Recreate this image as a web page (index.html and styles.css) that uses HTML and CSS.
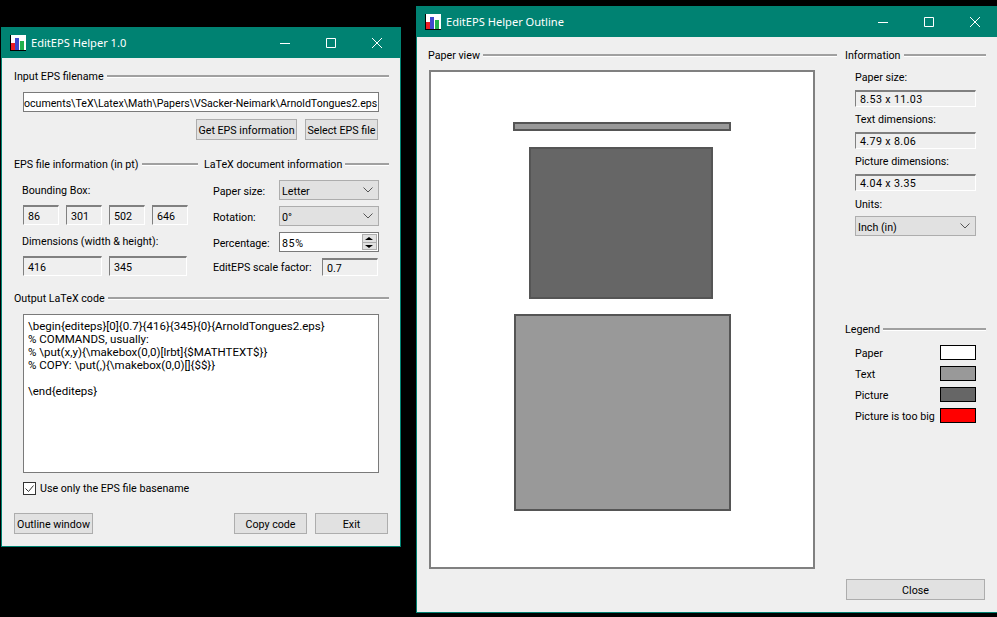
FILE: index.html
```html
<!DOCTYPE html>
<html lang="en">
<head>
  <meta charset="UTF-8">
  <title>EditEPS Helper</title>
  <link rel="stylesheet" href="styles.css">
</head>
<body>
  <div class="window main-window">
    <div class="titlebar">
      <svg class="app-icon" viewBox="0 0 16 16" xmlns="http://www.w3.org/2000/svg">
        <rect width="16" height="16" fill="#fff"/>
        <rect x="0" y="0" width="1" height="16" fill="#000"/>
        <rect x="0" y="15" width="16" height="1" fill="#000"/>
        <rect x="1" y="8" width="4" height="7" fill="#ed1c24"/>
        <rect x="5" y="3" width="4" height="12" fill="#3f48cc"/>
        <rect x="10" y="6" width="4" height="9" fill="#22b14c"/>
      </svg>
      <span class="title-text">EditEPS Helper 1.0</span>
      <div class="window-controls">
        <svg viewBox="0 0 46 30" xmlns="http://www.w3.org/2000/svg"><path d="M18 15.5h10" stroke="#fff" fill="none"/></svg>
        <svg viewBox="0 0 46 30" xmlns="http://www.w3.org/2000/svg"><path d="M18.5 10.5h9v9h-9z" stroke="#fff" fill="none"/></svg>
        <svg viewBox="0 0 46 30" xmlns="http://www.w3.org/2000/svg"><path d="M18 10l10 10M28 10l-10 10" stroke="#fff" fill="none"/></svg>
      </div>
    </div>
    <div class="main-body">
      <div class="group-title"><span>Input EPS filename</span></div>
      <div class="line-edit filename">ocuments\TeX\Latex\Math\Papers\VSacker-Neimark\ArnoldTongues2.eps</div>
      <div class="button-row">
        <button class="btn btn-info">Get EPS information</button>
        <button class="btn btn-select">Select EPS file</button>
      </div>

      <div class="info-columns">
        <div>
          <div class="group-title"><span>EPS file information (in pt)</span></div>
          <div class="field-label bbox-label">Bounding Box:</div>
          <div class="bbox-fields">
            <div class="sunken">86</div>
            <div class="sunken">301</div>
            <div class="sunken">502</div>
            <div class="sunken">646</div>
          </div>
          <div class="field-label dims-label">Dimensions (width &amp; height):</div>
          <div class="dims-fields">
            <div class="sunken">416</div>
            <div class="sunken">345</div>
          </div>
        </div>
        <div>
          <div class="group-title"><span>LaTeX document information</span></div>
          <div class="doc-form">
            <label>Paper size:</label>
            <div class="combo"><span>Letter</span><svg class="chevron" viewBox="0 0 10 6" xmlns="http://www.w3.org/2000/svg"><path d="M.5.5L5 5 9.500.5" fill="none" stroke="#555"/></svg></div>
            <label>Rotation:</label>
            <div class="combo"><span>0°</span><svg class="chevron" viewBox="0 0 10 6" xmlns="http://www.w3.org/2000/svg"><path d="M.5.5L5 5 9.500.5" fill="none" stroke="#555"/></svg></div>
            <label>Percentage:</label>
            <div class="line-edit spin">
              <span>85%</span>
              <div class="spin-buttons">
                <div class="spin-up"></div>
                <div class="spin-down"></div>
              </div>
            </div>
          </div>
          <div class="scale-row">
            <label>EditEPS scale factor:</label>
            <div class="sunken scale-field">0.7</div>
          </div>
        </div>
      </div>

      <div class="group-title output-title"><span>Output LaTeX code</span></div>
      <div class="code-box">\begin{editeps}[0]{0.7}{416}{345}{0}{ArnoldTongues2.eps}
% COMMANDS, usually:
% \put(x,y){\makebox(0,0)[lrbt]{$MATHTEXT$}}
% COPY: \put(,){\makebox(0,0)[]{$$}}

\end{editeps}</div>
      <div class="check-row">
        <svg class="checkbox" viewBox="0 0 13 13" xmlns="http://www.w3.org/2000/svg">
          <rect x=".5" y=".5" width="12" height="12" fill="#fff" stroke="#333"/>
          <path d="M2.500 6.500l3 3 5-6" fill="none" stroke="#333"/>
        </svg>
        <span>Use only the EPS file basename</span>
      </div>
      <div class="footer-row">
        <button class="btn btn-outline">Outline window</button>
        <button class="btn btn-footer">Copy code</button>
        <button class="btn btn-footer">Exit</button>
      </div>
    </div>
  </div>

  <div class="window outline-window">
    <div class="titlebar">
      <svg class="app-icon" viewBox="0 0 16 16" xmlns="http://www.w3.org/2000/svg">
        <rect width="16" height="16" fill="#fff"/>
        <rect x="0" y="0" width="1" height="16" fill="#000"/>
        <rect x="0" y="15" width="16" height="1" fill="#000"/>
        <rect x="1" y="8" width="4" height="7" fill="#ed1c24"/>
        <rect x="5" y="3" width="4" height="12" fill="#3f48cc"/>
        <rect x="10" y="6" width="4" height="9" fill="#22b14c"/>
      </svg>
      <span class="title-text">EditEPS Helper Outline</span>
      <div class="window-controls">
        <svg viewBox="0 0 46 30" xmlns="http://www.w3.org/2000/svg"><path d="M18 15.5h10" stroke="#fff" fill="none"/></svg>
        <svg viewBox="0 0 46 30" xmlns="http://www.w3.org/2000/svg"><path d="M18.5 10.5h9v9h-9z" stroke="#fff" fill="none"/></svg>
        <svg viewBox="0 0 46 30" xmlns="http://www.w3.org/2000/svg"><path d="M18 10l10 10M28 10l-10 10" stroke="#fff" fill="none"/></svg>
      </div>
    </div>
    <div class="outline-body">
      <div class="paper-column">
        <div class="group-title"><span>Paper view</span></div>
        <div class="paper">
          <div class="sheet-rect text-rect bar-rect"></div>
          <div class="sheet-rect picture-rect"></div>
          <div class="sheet-rect text-rect body-rect"></div>
        </div>
      </div>
      <div class="side-column">
        <div class="group-title"><span>Information</span></div>
        <div class="info-item">
          <div class="info-label">Paper size:</div>
          <div class="sunken info-field">8.53 x 11.03</div>
        </div>
        <div class="info-item">
          <div class="info-label">Text dimensions:</div>
          <div class="sunken info-field">4.79 x 8.06</div>
        </div>
        <div class="info-item">
          <div class="info-label">Picture dimensions:</div>
          <div class="sunken info-field">4.04 x 3.35</div>
        </div>
        <div class="info-item units-item">
          <div class="info-label">Units:</div>
          <div class="combo units-combo"><span>Inch (in)</span><svg class="chevron" viewBox="0 0 10 6" xmlns="http://www.w3.org/2000/svg"><path d="M.5.5L5 5 9.500.5" fill="none" stroke="#555"/></svg></div>
        </div>

        <div class="group-title legend-title"><span>Legend</span></div>
        <div class="legend">
          <div class="legend-row"><span>Paper</span><div class="swatch swatch-paper"></div></div>
          <div class="legend-row"><span>Text</span><div class="swatch swatch-text"></div></div>
          <div class="legend-row"><span>Picture</span><div class="swatch swatch-picture"></div></div>
          <div class="legend-row"><span>Picture is too big</span><div class="swatch swatch-big"></div></div>
        </div>
        <button class="btn btn-close">Close</button>
      </div>
    </div>
  </div>
</body>
</html>
```

FILE: styles.css
```css
* {
  margin: 0;
  padding: 0;
  box-sizing: border-box;
}

body {
  width: 997px;
  height: 617px;
  background-color: #000;
  overflow: hidden;
  position: relative;
  font-family: Roboto, "Noto Sans", sans-serif;
  font-size: 10.7px;
  line-height: 16px;
  color: #000;
}

/* windows sit on a free desktop */
.window {
  position: absolute;
  background-color: #efefef;
  border: 1px solid #008272;
  display: flex;
  flex-direction: column;
}

.main-window {
  left: 1px;
  top: 27px;
  width: 400px;
  height: 520px;
}

.outline-window {
  left: 416px;
  top: 6px;
  width: 583px;
  height: 607px;
}

.titlebar {
  height: 30px;
  flex: none;
  background-color: #008272;
  color: #fff;
  display: flex;
  align-items: center;
  padding-left: 8px;
}

.app-icon {
  width: 16px;
  height: 16px;
  flex: none;
}

.title-text {
  margin-left: 5px;
  font-family: "Noto Sans", sans-serif;
  font-size: 11.1px;
}

.window-controls {
  margin-left: auto;
  display: flex;
}

.window-controls svg {
  width: 46px;
  height: 30px;
  display: block;
}

.group-title {
  display: flex;
  align-items: center;
  height: 16px;
  white-space: nowrap;
}

.group-title span {
  height: 16px;
  line-height: 18px;
}

.group-title::after {
  content: "";
  flex: 1;
  height: 2px;
  margin-left: 3px;
  background-color: #a0a0a0;
  border-bottom: 1px solid #fff;
}

.main-body {
  flex: 1;
  padding: 10px 11px 0 12px;
}

.line-edit {
  background-color: #fff;
  border: 1px solid #7a7a7a;
  height: 20px;
  line-height: 22px;
  white-space: nowrap;
  overflow: hidden;
}

.filename {
  margin: 8px 10px 0 9px;
  font-size: 10.6px;
}

.button-row {
  display: flex;
  justify-content: flex-end;
  gap: 8px;
  margin: 7px 11px 0 0;
}

.btn {
  height: 21px;
  padding-top: 2px;
  font: inherit;
  color: #000;
  background-color: #e1e1e1;
  border: 1px solid #adadad;
  text-align: center;
  white-space: nowrap;
}

.btn-info {
  width: 101px;
}

.btn-select {
  width: 73px;
}

.info-columns {
  display: grid;
  grid-template-columns: 184px 185px;
  gap: 6px;
  margin-top: 16px;
}

.field-label {
  height: 16px;
  line-height: 18px;
  margin-left: 8px;
}

.bbox-label {
  margin-top: 10px;
}

.dims-label {
  margin-top: 8px;
}

.sunken {
  height: 20px;
  padding-left: 4px;
  line-height: 20px;
  background-color: #efefef;
  border: 1px solid #fff;
  border-top: 2px solid #808080;
  border-left: 1px solid #808080;
  white-space: nowrap;
}

.bbox-fields {
  display: grid;
  grid-template-columns: 36px 36px 36px 36px;
  gap: 7px;
  margin: 7px 11px 0 9px;
}

.dims-fields {
  display: grid;
  grid-template-columns: 79px 78px;
  gap: 7px;
  margin: 7px 11px 0 9px;
}

.doc-form {
  display: grid;
  grid-template-columns: 66px 100px;
  row-gap: 6px;
  align-items: center;
  margin: 8px 0 0 9px;
}

.doc-form label {
  margin-top: 4px;
}

.combo {
  height: 20px;
  padding: 0 4px 0 2px;
  background-color: #e1e1e1;
  border: 1px solid #adadad;
  display: flex;
  align-items: center;
  justify-content: space-between;
}

.combo span {
  margin-top: 4px;
}

.chevron {
  width: 10px;
  height: 6px;
  margin-right: 1px;
}

.spin {
  display: flex;
  align-items: center;
  justify-content: space-between;
  padding-left: 2px;
  line-height: 16px;
}

.spin span {
  margin-top: 4px;
  letter-spacing: 0.6px;
}

.spin-buttons {
  width: 15px;
  height: 16px;
  margin-right: 1px;
  display: flex;
  flex-direction: column;
  border: 1px solid #adadad;
  background-color: #e1e1e1;
}

.spin-up,
.spin-down {
  flex: 1;
  position: relative;
}

.spin-down {
  border-top: 1px solid #adadad;
}

.spin-up::after,
.spin-down::after {
  content: "";
  position: absolute;
  left: 2px;
  top: 2px;
  border-left: 4px solid transparent;
  border-right: 4px solid transparent;
}

.spin-up::after {
  border-bottom: 3px solid #000;
}

.spin-down::after {
  border-top: 3px solid #000;
}

.scale-row {
  display: flex;
  align-items: center;
  margin: 6px 0 0 9px;
}

.scale-row label {
  width: 109px;
  margin-top: 2px;
}

.scale-field {
  width: 56px;
  height: 18px;
  line-height: 18px;
}

.output-title {
  margin-top: 14px;
}

.code-box {
  margin: 8px 10px 0 9px;
  height: 159px;
  padding: 5px 4px;
  font-size: 11.5px;
  background-color: #fff;
  border: 1px solid #7a7a7a;
  white-space: pre;
  line-height: 13px;
}

.check-row {
  display: flex;
  align-items: center;
  gap: 4px;
  height: 14px;
  margin: 8px 0 0 9px;
}

.check-row span {
  margin-top: 2px;
}

.checkbox {
  width: 13px;
  height: 13px;
}

.footer-row {
  display: flex;
  gap: 8px;
  margin: 18px 1px 0 0;
}

.btn-outline {
  width: 79px;
  margin-right: auto;
}

.btn-footer {
  width: 73px;
}

.outline-body {
  flex: 1;
  display: flex;
  gap: 8px;
  padding: 10px 12px 12px 11px;
}

.paper-column {
  width: 409px;
}

.paper {
  position: relative;
  width: 386px;
  height: 499px;
  margin: 7px 0 0 1px;
  background-color: #fff;
  border: 2px solid #808080;
}

.sheet-rect {
  position: absolute;
  border: 2px solid #555;
}

.text-rect {
  background-color: #999;
}

.bar-rect {
  left: 82px;
  top: 50px;
  width: 218px;
  height: 9px;
}

.picture-rect {
  left: 98px;
  top: 75px;
  width: 184px;
  height: 152px;
  background-color: #666;
}

.body-rect {
  left: 83px;
  top: 242px;
  width: 217px;
  height: 197px;
}

.side-column {
  width: 141px;
  display: flex;
  flex-direction: column;
}

.info-item {
  margin-left: 10px;
  width: 121px;
}

.info-label {
  height: 16px;
  line-height: 18px;
  margin-top: 6px;
}

.info-field {
  height: 17px;
  line-height: 16px;
  margin-top: 5px;
  letter-spacing: 0.35px;
}

.info-item + .info-item .info-label {
  margin-top: 4px;
}

.info-item.units-item .info-label {
  margin-top: 5px;
}

.units-combo {
  margin-top: 4px;
}

.legend-title {
  margin-top: 85px;
}

.legend {
  margin: 8px 0 0 10px;
  width: 121px;
  display: flex;
  flex-direction: column;
  gap: 6px;
}

.legend-row {
  height: 15px;
  display: flex;
  align-items: center;
  justify-content: space-between;
  white-space: nowrap;
}

.legend-row span {
  margin-top: 2px;
}

.swatch {
  width: 36px;
  height: 15px;
  border: 1px solid #000;
}

.swatch-paper {
  background-color: #fff;
}

.swatch-text {
  background-color: #999;
}

.swatch-picture {
  background-color: #666;
}

.swatch-big {
  background-color: #f00;
}

.btn-close {
  margin: auto 0 0 1px;
  width: 139px;
}
```
